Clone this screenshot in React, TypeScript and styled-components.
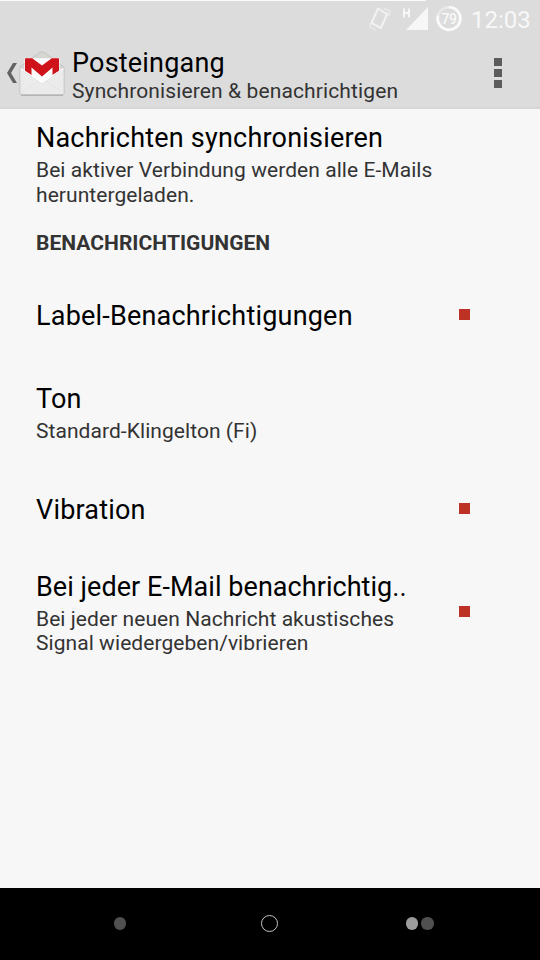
import React from "react";
import styled, { createGlobalStyle } from "styled-components";

const GlobalStyle = createGlobalStyle`
  * { box-sizing: border-box; }
  body { margin: 0; background: #f7f7f7; }
`;

const Screen = styled.div`
  width: 540px;
  height: 960px;
  display: flex;
  flex-direction: column;
  overflow: hidden;
  background: #f7f7f7;
  font-family: Roboto, "Noto Sans", sans-serif;
  color: #000;
`;

const TopArea = styled.header`
  height: 109px;
  flex: none;
  background: #dcdcdc;
  border-bottom: 2px solid #d6d6d6;
`;

const LoadingLine = styled.div`
  width: 426px;
  height: 1px;
  background: #fbfbfb;
`;

const StatusBar = styled.div`
  height: 36px;
  display: flex;
  align-items: center;
  justify-content: flex-end;
  padding-right: 9px;
`;

const StatusIcon = styled.svg<{ $gap: number }>`
  display: block;
  flex: none;
  margin-right: ${(p) => p.$gap}px;
`;

const Clock = styled.span`
  width: 60px;
  font-size: 24px;
  line-height: 36px;
  padding-top: 2px;
  color: #f8f8f8;
  white-space: nowrap;
`;

const ActionBar = styled.div`
  height: 70px;
  display: flex;
  align-items: flex-start;
  padding-left: 6px;
`;

const BackIcon = styled.svg`
  margin-top: 25px;
  flex: none;
`;

const MailIcon = styled.svg`
  margin: 12px 7px 0 2px;
  flex: none;
`;

const Titles = styled.div`
  flex: 1;
  padding-top: 10px;
`;

const Overflow = styled.div`
  width: 8px;
  margin: 21px 38px 0 0;
  display: flex;
  flex-direction: column;
  gap: 3px;
`;

const OverflowDot = styled.i`
  height: 8px;
  background: #5c5c5c;
`;

const Title = styled.div<{ $spacing?: number }>`
  font-size: 27px;
  line-height: 32px;
  letter-spacing: ${(p) => p.$spacing ?? 0.2}px;
  white-space: nowrap;
`;

const Summary = styled.div<{ $spacing?: number }>`
  margin-top: 4px;
  font-size: 21px;
  line-height: 24.5px;
  letter-spacing: ${(p) => p.$spacing ?? 0.06}px;
  color: #333;
  white-space: pre;
`;

const Subtitle = styled(Summary)`
  margin-top: 0;
`;

const Content = styled.main`
  flex: 1;
`;

const Row = styled.section<{ $height: number }>`
  height: ${(p) => p.$height}px;
  display: flex;
  align-items: center;
  justify-content: space-between;
  padding: 0 70px 0 36px;
`;

const RowText = styled.div`
  padding-top: 3px;
`;

const SectionHeading = styled.h2`
  height: 49px;
  margin: 0;
  padding: 0 36px;
  font-size: 21px;
  line-height: 53px;
  font-weight: 700;
  letter-spacing: 0.03px;
  color: #333;
`;

const Check = styled.span`
  width: 11px;
  height: 11px;
  flex: none;
  background: #be3226;
`;

const NavBar = styled.nav`
  height: 72px;
  flex: none;
  display: grid;
  grid-template-columns: 240px 59px 241px;
  align-items: center;
  justify-items: center;
  padding-bottom: 1px;
  background: #000;
`;

const NavGroup = styled.div`
  display: flex;
  gap: 3px;
`;

const NavDot = styled.i<{ $color: string }>`
  width: 12.5px;
  height: 12.5px;
  border-radius: 50%;
  background: ${(p) => p.$color};
`;

const HomeRing = styled.i`
  width: 17px;
  height: 17px;
  border: 1px solid #c4c4c4;
  border-radius: 50%;
`;

type Setting = {
  title: string;
  summary?: string;
  checkable?: boolean;
  height: number;
  spacing?: number;
};

const syncSetting: Setting = {
  title: "Nachrichten synchronisieren",
  summary: "Bei aktiver Verbindung werden alle E-Mails\nheruntergeladen.",
  height: 108,
};

const notificationSettings: Setting[] = [
  { title: "Label-Benachrichtigungen", checkable: true, height: 97 },
  { title: "Ton", summary: "Standard-Klingelton (Fi)", height: 97 },
  { title: "Vibration", checkable: true, height: 97 },
  {
    title: "Bei jeder E-Mail benachrichtig..",
    summary: "Bei jeder neuen Nachricht akustisches\nSignal wiedergeben/vibrieren",
    checkable: true,
    height: 109,
    spacing: 0.05,
  },
];

function SettingRow({ setting }: { setting: Setting }) {
  return (
    <Row $height={setting.height}>
      <RowText>
        <Title $spacing={setting.spacing}>{setting.title}</Title>
        {setting.summary && <Summary>{setting.summary}</Summary>}
      </RowText>
      {setting.checkable && <Check />}
    </Row>
  );
}

function StatusIcons() {
  return (
    <>
      <StatusIcon $gap={11} width="22" height="26" viewBox="0 0 22 26" fill="none">
        <path d="M9 2.500 L18 8 L12 22 L2.500 17 Z" stroke="#f2f2f2" strokeWidth="2" strokeLinejoin="round" />
        <path d="M14.500 2 L20.500 5 L20 10 M1 17 L1.500 21.500 L7 24" stroke="#e9e9e9" strokeWidth="1.800" />
      </StatusIcon>
      <StatusIcon $gap={8} width="26" height="26" viewBox="0 0 26 26">
        <path d="M26 1 V24 H4 Z" fill="#f7f7f7" />
        <path d="M2 2.500 V11.500 M7 2.500 V11.500 M2 7 H7" stroke="#f7f7f7" strokeWidth="1.900" />
      </StatusIcon>
      <StatusIcon $gap={9} width="26" height="26" viewBox="0 0 26 26">
        <circle cx="13" cy="12.500" r="11.300" fill="none" stroke="#e9e9e9" strokeWidth="2.400" />
        <path d="M13 1.200 A11.300 11.300 0 1 1 2.100 9.500" fill="none" stroke="#fafafa" strokeWidth="2.800" />
        <text x="13" y="17.500" textAnchor="middle" fontFamily="Roboto, sans-serif" fontSize="14" fontWeight="500" letterSpacing="-0.5" fill="#f9f9f9">79</text>
      </StatusIcon>
    </>
  );
}

function GmailIcon() {
  return (
    <MailIcon width="46" height="48" viewBox="0 0 46 48">
      <path d="M1 18 L20 4 Q23 1.500 26 4 L45 18 V45 H1 Z" fill="#d6d6d3" stroke="#bdbdbd" strokeWidth=".8" />
      <path d="M5.500 9.300 H40.500 V38 H5.500 Z" fill="#fafafa" />
      <path d="M6 30 V10 Q6 9.300 6.700 9.300 H13.200 L23 16.500 L32.800 9.300 H39.300 Q40 9.300 40 10 V30 H33.500 V18.500 L23 27.500 L12.500 18.500 V30 Z" fill="#cf1119" />
      <path d="M1 19.500 L22 33.500 Q23 34 24 33.500 L45 19.500 V44 Q45 46 43 46 H3 Q1 46 1 44 Z" fill="#ebebeb" stroke="#c5c5c5" strokeWidth=".7" />
      <path d="M2 44 L19 32 M44 44 L27 32" stroke="#e3e3e3" strokeWidth=".8" />
      <path d="M1.500 19.500 L23 33.500 L44.500 19.500" fill="none" stroke="#fff" strokeWidth="1.400" />
      <path d="M2 46.200 H44" stroke="#aaa" strokeWidth="1.300" />
    </MailIcon>
  );
}

export default function App() {
  return (
    <Screen>
      <GlobalStyle />
      <TopArea>
        <LoadingLine />
        <StatusBar>
          <StatusIcons />
          <Clock>12:03</Clock>
        </StatusBar>
        <ActionBar>
          <BackIcon width="11" height="22" viewBox="0 0 11 22">
            <path d="M7 1 H11 L5 11 L11 21 H7 L1 11 Z" fill="#636363" />
          </BackIcon>
          <GmailIcon />
          <Titles>
            <Title>Posteingang</Title>
            <Subtitle $spacing={0.12}>Synchronisieren &amp; benachrichtigen</Subtitle>
          </Titles>
          <Overflow>
            <OverflowDot />
            <OverflowDot />
            <OverflowDot />
          </Overflow>
        </ActionBar>
      </TopArea>
      <Content>
        <SettingRow setting={syncSetting} />
        <SectionHeading>BENACHRICHTIGUNGEN</SectionHeading>
        {notificationSettings.map((s) => (
          <SettingRow key={s.title} setting={s} />
        ))}
      </Content>
      <NavBar>
        <NavDot $color="#505050" />
        <HomeRing />
        <NavGroup>
          <NavDot $color="#9c9c9c" />
          <NavDot $color="#505050" />
        </NavGroup>
      </NavBar>
    </Screen>
  );
}
